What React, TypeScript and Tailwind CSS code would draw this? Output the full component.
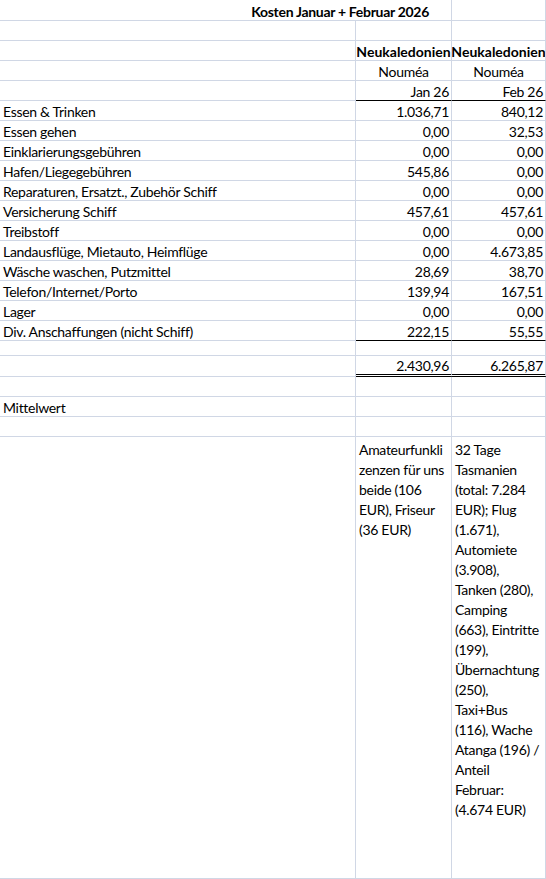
import React from 'react';

type CellProps = {
  children?: React.ReactNode;
  className?: string;
  bottom?: string;
};

function Cell({ children, className = '', bottom = 'border-b border-b-[#d0d7e5]' }: CellProps) {
  return (
    <div className={`h-full min-w-0 overflow-hidden whitespace-nowrap border-r border-r-[#d0d7e5] flex items-end px-[3px] ${bottom} ${className}`}>
      {children}
    </div>
  );
}

const costs: [string, string, string][] = [
  ['Essen & Trinken', '1.036,71', '840,12'],
  ['Essen gehen', '0,00', '32,53'],
  ['Einklarierungsgebühren', '0,00', '0,00'],
  ['Hafen/Liegegebühren', '545,86', '0,00'],
  ['Reparaturen, Ersatzt., Zubehör Schiff', '0,00', '0,00'],
  ['Versicherung Schiff', '457,61', '457,61'],
  ['Treibstoff', '0,00', '0,00'],
  ['Landausflüge, Mietauto, Heimflüge', '0,00', '4.673,85'],
  ['Wäsche waschen, Putzmittel', '28,69', '38,70'],
  ['Telefon/Internet/Porto', '139,94', '167,51'],
  ['Lager', '0,00', '0,00'],
  ['Div. Anschaffungen (nicht Schiff)', '222,15', '55,55'],
];

const noteJan = ['Amateurfunkli', 'zenzen für uns', 'beide (106', 'EUR), Friseur', '(36 EUR)'];
const noteFeb = [
  '32 Tage', 'Tasmanien', '(total: 7.284', 'EUR); Flug', '(1.671),', 'Automiete', '(3.908),',
  'Tanken (280),', 'Camping', '(663), Eintritte', '(199),', 'Übernachtung', '(250),', 'Taxi+Bus',
  '(116), Wache', 'Atanga (196) /', 'Anteil', 'Februar:', '(4.674 EUR)',
];

const black = 'border-b border-b-black';

export default function App() {
  return (
    <div className="w-[546px] h-[879px] bg-white text-black text-[14px] tracking-[-0.3px] leading-[16px] font-['Lato','Liberation_Sans',sans-serif]">
      {/* Titel */}
      <div className="grid grid-cols-[452px_94px] h-[21px]">
        <Cell className="justify-end pr-[22px] font-bold">Kosten Januar + Februar 2026</Cell>
        <Cell />
      </div>
      <div className="grid grid-cols-[356px_96px_94px] h-[20px]">
        <Cell /><Cell /><Cell />
      </div>
      <div className="grid grid-cols-[356px_96px_94px] h-[20px]">
        <Cell />
        <Cell className="justify-center font-bold px-0 tracking-normal">Neukaledonien</Cell>
        <Cell className="justify-center font-bold px-0 tracking-normal">Neukaledonien</Cell>
      </div>
      <div className="grid grid-cols-[356px_96px_94px] h-[20px]">
        <Cell />
        <Cell className="justify-center">Nouméa</Cell>
        <Cell className="justify-center">Nouméa</Cell>
      </div>
      <div className="grid grid-cols-[356px_96px_94px] h-[20px]">
        <Cell />
        <Cell className="justify-end pr-[2px]" bottom={black}>Jan 26</Cell>
        <Cell className="justify-end pr-[2px]" bottom={black}>Feb 26</Cell>
      </div>

      {costs.map(([label, jan, feb], i) => {
        const last = i === costs.length - 1;
        return (
          <div key={label} className="grid grid-cols-[356px_96px_94px] h-[20px]">
            <Cell>{label}</Cell>
            <Cell className="justify-end pr-[2px]" bottom={last ? black : undefined}>{jan}</Cell>
            <Cell className="justify-end pr-[2px]" bottom={last ? black : undefined}>{feb}</Cell>
          </div>
        );
      })}

      <div className="grid grid-cols-[356px_96px_94px] h-[15px]">
        <Cell /><Cell /><Cell />
      </div>
      <div className="grid grid-cols-[356px_96px_94px] h-[21px]">
        <Cell />
        <Cell className="justify-end pr-[2px]" bottom="border-b-[3px] border-double border-b-black">2.430,96</Cell>
        <Cell className="justify-end pr-[2px]" bottom="border-b-[3px] border-double border-b-black">6.265,87</Cell>
      </div>
      <div className="grid grid-cols-[356px_96px_94px] h-[20px]">
        <Cell /><Cell /><Cell />
      </div>
      <div className="grid grid-cols-[356px_96px_94px] h-[20px]">
        <Cell>Mittelwert</Cell><Cell /><Cell />
      </div>
      <div className="grid grid-cols-[356px_96px_94px] h-[20px]">
        <Cell /><Cell /><Cell />
      </div>

      {/* Bemerkungen */}
      <div className="grid grid-cols-[356px_96px_94px] h-[442px]">
        <Cell />
        <Cell className="flex-col items-start justify-start pt-[3px] leading-[20px]">
          {noteJan.map((l) => <div key={l}>{l}</div>)}
        </Cell>
        <Cell className="flex-col items-start justify-start pt-[3px] leading-[20px]">
          {noteFeb.map((l) => <div key={l}>{l}</div>)}
        </Cell>
      </div>
    </div>
  );
}
